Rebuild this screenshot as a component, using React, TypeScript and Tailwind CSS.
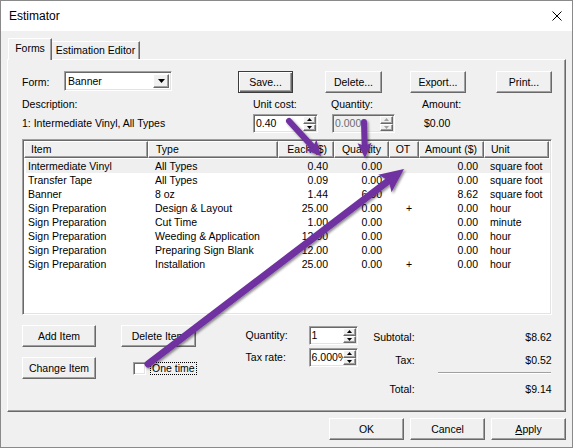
import React from "react";

const raised =
  "border border-t-white border-l-white border-r-[#696969] border-b-[#696969] shadow-[inset_-1px_-1px_0_#a0a0a0]";
const sunken =
  "border border-t-[#a0a0a0] border-l-[#a0a0a0] border-r-white border-b-white shadow-[inset_1px_1px_0_#696969,inset_-1px_-1px_0_#e3e3e3]";

function Btn({ className = "", children, def = false }: { className?: string; children: React.ReactNode; def?: boolean }) {
  return (
    <div
      className={`${
        def
          ? "border border-[#3c3c3c] shadow-[inset_1px_1px_0_#fff,inset_-1px_-1px_0_#696969,inset_-2px_-2px_0_#a0a0a0]"
          : raised
      } bg-[#f0f0f0] h-[22px] flex items-center justify-center shrink-0 ${className}`}
    >
      {children}
    </div>
  );
}

function Tri({ up = false, disabled = false }: { up?: boolean; disabled?: boolean }) {
  return (
    <svg width="5" height="3" viewBox="0 0 5 3">
      <polygon points={up ? "2.5,0 5,3 0,3" : "0,0 5,0 2.5,3"} fill={disabled ? "#a0a0a0" : "#000"} />
    </svg>
  );
}

function Spin({ value, className = "", disabled = false }: { value: string; className?: string; disabled?: boolean }) {
  return (
    <div className={`${sunken} ${disabled ? "bg-[#f0f0f0]" : "bg-white"} h-[19px] flex p-[1px] shrink-0 ${className}`}>
      <div
        className={`flex-1 flex items-center pl-[1px] overflow-hidden whitespace-nowrap ${
          disabled ? "text-[#6d6d6d]" : ""
        }`}
      >
        {value}
      </div>
      <div className="w-[13px] flex flex-col bg-[#f0f0f0]">
        <div className={`${raised} flex-1 flex items-center justify-center`}>
          <Tri up disabled={disabled} />
        </div>
        <div className={`${raised} flex-1 flex items-center justify-center`}>
          <Tri disabled={disabled} />
        </div>
      </div>
    </div>
  );
}

function Arrow({
  x1,
  y1,
  x2,
  y2,
  w,
  hl,
  hw,
}: {
  x1: number;
  y1: number;
  x2: number;
  y2: number;
  w: number;
  hl: number;
  hw: number;
}) {
  const dx = x2 - x1;
  const dy = y2 - y1;
  const L = Math.hypot(dx, dy);
  const ux = dx / L;
  const uy = dy / L;
  const nx = -uy;
  const ny = ux;
  const bx = x2 - ux * hl;
  const by = y2 - uy * hl;
  const notchX = bx + ux * hl * 0.2;
  const notchY = by + uy * hl * 0.2;
  const pts = [
    [x2, y2],
    [bx + (nx * hw) / 2, by + (ny * hw) / 2],
    [notchX, notchY],
    [bx - (nx * hw) / 2, by - (ny * hw) / 2],
  ]
    .map((p) => p.join(","))
    .join(" ");
  return (
    <g filter="url(#shadow)">
      <line x1={x1} y1={y1} x2={notchX + ux * 1} y2={notchY + uy * 1} stroke="#7030a0" strokeWidth={w} strokeLinecap="round" />
      <polygon points={pts} fill="#7030a0" />
    </g>
  );
}

const rows = [
  ["Intermediate Vinyl", "All Types", "0.40", "0.00", "", "0.00", "square foot"],
  ["Transfer Tape", "All Types", "0.09", "0.00", "", "0.00", "square foot"],
  ["Banner", "8 oz", "1.44", "6.00", "", "8.62", "square foot"],
  ["Sign Preparation", "Design & Layout", "25.00", "0.00", "+", "0.00", "hour"],
  ["Sign Preparation", "Cut Time", "1.00", "0.00", "", "0.00", "minute"],
  ["Sign Preparation", "Weeding & Application", "12.00", "0.00", "", "0.00", "hour"],
  ["Sign Preparation", "Preparing Sign Blank", "12.00", "0.00", "", "0.00", "hour"],
  ["Sign Preparation", "Installation", "25.00", "0.00", "+", "0.00", "hour"],
];

const hdr = `${raised} bg-[#f0f0f0] h-full flex items-center shrink-0`;

export default function App() {
  return (
    <div className="w-[573px] h-[448px] bg-[#f0f0f0] border border-[#8a8a8a] relative overflow-hidden font-['Liberation_Sans',Arial,sans-serif] text-[10.5px] text-black leading-none flex flex-col">
      {/* Title bar */}
      <div className="h-[30px] bg-white flex items-center pl-[8px] pr-[10px] shrink-0">
        <span className="text-[12px]">Estimator</span>
        <svg className="ml-auto" width="10" height="10" viewBox="0 0 10 10">
          <path d="M0.5 0.5 L9.5 9.5 M9.5 0.5 L0.5 9.5" stroke="#000" strokeWidth="1" />
        </svg>
      </div>

      {/* Body */}
      <div className="px-[6px] flex flex-col">
        {/* Tabs */}
        <div className="h-[28px] flex items-end">
          <div className="ml-[1px] w-[44px] h-[22px] mb-[-1px] relative z-10 bg-[#f0f0f0] border-t border-l border-t-white border-l-white border-r border-r-[#696969] shadow-[inset_-1px_0_0_#a0a0a0] flex items-center justify-center pb-[2px]">
            Forms
          </div>
          <div className="w-[88px] h-[18px] bg-[#f0f0f0] border-t border-t-white border-r border-r-[#696969] shadow-[inset_-1px_0_0_#a0a0a0] flex items-center justify-center">
            Estimation Editor
          </div>
        </div>

        {/* Panel */}
        <div className="h-[353px] border border-t-white border-l-white border-r-[#696969] border-b-[#696969] shadow-[inset_-1px_-1px_0_#a0a0a0] pl-[14px] flex flex-col">
          {/* Row 1 */}
          <div className="mt-[11px] h-[22px] flex items-start">
            <div className="w-[42px] h-[22px] flex items-center">Form:</div>
            <div className={`${sunken} bg-white w-[108px] h-[20px] flex items-center p-[2px] shrink-0`}>
              <span className="pl-[1px] flex-1">Banner</span>
              <div className={`${raised} bg-[#f0f0f0] w-[16px] h-full flex items-center justify-center`}>
                <svg width="7" height="4" viewBox="0 0 7 4">
                  <polygon points="0,0 7,0 3.5,4" fill="#000" />
                </svg>
              </div>
            </div>
            <Btn def className="ml-[66px] w-[55px]">
              Save...
            </Btn>
            <Btn className="ml-[32px] w-[57px]">Delete...</Btn>
            <Btn className="ml-[28px] w-[56px]">Export...</Btn>
            <Btn className="ml-[30px] w-[56px]">Print...</Btn>
          </div>

          {/* Row 2 */}
          <div className="mt-[4px] h-[14px] flex items-center">
            <div className="w-[231px]">Description:</div>
            <div className="w-[78px]">Unit cost:</div>
            <div className="w-[91px]">Quantity:</div>
            <div>Amount:</div>
          </div>

          {/* Row 3 */}
          <div className="mt-[3px] h-[19px] flex items-center">
            <div className="w-[231px] shrink-0">1: Intermediate Vinyl, All Types</div>
            <Spin value="0.40" className="w-[65px]" />
            <Spin value="0.000" disabled className="ml-[14px] w-[63px]" />
            <div className="ml-[29px]">$0.00</div>
          </div>

          {/* List */}
          <div className={`${sunken} bg-white mt-[6px] w-[530px] h-[176px] p-[1px] flex flex-col shrink-0`}>
            <div className="h-[17px] flex">
              <div className={`${hdr} w-[124px] pl-[6px]`}>Item</div>
              <div className={`${hdr} w-[130px] pl-[7px]`}>Type</div>
              <div className={`${hdr} w-[56px] justify-end pr-[6px]`}>Each ($)</div>
              <div className={`${hdr} w-[55px] justify-end pr-[7px]`}>Quantity</div>
              <div className={`${hdr} w-[30px] justify-center pr-[2px]`}>OT</div>
              <div className={`${hdr} w-[65px] justify-end pr-[6px]`}>Amount ($)</div>
              <div className={`${hdr} w-[65px] pl-[6px]`}>Unit</div>
            </div>
            <div className="pt-[1px] flex flex-col">
              {rows.map((r, i) => (
                <div key={i} className={`h-[14px] flex items-center ${i === 0 ? "bg-[#efefef] ml-[2px]" : ""}`}>
                  <div className={`${i === 0 ? "w-[122px] pl-[2px]" : "w-[124px] pl-[4px]"} shrink-0 whitespace-nowrap`}>{r[0]}</div>
                  <div className="w-[130px] pl-[7px] shrink-0 whitespace-nowrap">{r[1]}</div>
                  <div className="w-[56px] pr-[6px] text-right shrink-0">{r[2]}</div>
                  <div className="w-[55px] pr-[7px] text-right shrink-0">{r[3]}</div>
                  <div className="w-[30px] pl-[17px] shrink-0">{r[4]}</div>
                  <div className="w-[65px] pr-[6px] text-right shrink-0">{r[5]}</div>
                  <div className="w-[65px] pl-[6px] shrink-0 whitespace-nowrap">{r[6]}</div>
                </div>
              ))}
            </div>
          </div>

          {/* Bottom controls */}
          <div className="mt-[10px] flex items-start">
            <div className="flex flex-col">
              <div className="flex">
                <Btn className="w-[74px]">Add Item</Btn>
                <Btn className="ml-[25px] w-[75px]">Delete Item</Btn>
              </div>
              <div className="mt-[10px] flex items-center">
                <Btn className="w-[74px]">Change Item</Btn>
                <div className={`${sunken} bg-white ml-[37px] w-[13px] h-[13px] mt-[1px]`} />
                <div className="ml-[4px] border border-dotted border-black px-[1px] h-[13px] flex items-center mt-[1px]">
                  One time
                </div>
              </div>
            </div>

            <div className="ml-[49px] mt-[1px] flex flex-col">
              <div className="h-[19px] flex items-center">
                <div className="w-[63px]">Quantity:</div>
                <Spin value="1" className="w-[49px]" />
              </div>
              <div className="mt-[3px] h-[19px] flex items-center">
                <div className="w-[63px]">Tax rate:</div>
                <Spin value="6.000%" className="w-[49px]" />
              </div>
            </div>

            <div className="ml-[13px] w-[181px] flex flex-col">
              <div className="mt-[5px] h-[14px] flex items-center">
                <div className="w-[44px] text-right">Subtotal:</div>
                <div className="flex-1 text-right">$8.62</div>
              </div>
              <div className="mt-[9px] h-[14px] flex items-center">
                <div className="w-[44px] text-right">Tax:</div>
                <div className="flex-1 text-right">$0.52</div>
              </div>
              <div className="mt-[5px] ml-[67px] w-[113px] h-[2px] border-t border-t-[#a0a0a0] border-b border-b-white" />
              <div className="mt-[8px] h-[14px] flex items-center">
                <div className="w-[44px] text-right">Total:</div>
                <div className="flex-1 text-right">$9.14</div>
              </div>
            </div>
          </div>
        </div>

        {/* Dialog buttons */}
        <div className="mt-[6px] flex justify-end gap-[6px]">
          <Btn className="w-[75px]">OK</Btn>
          <Btn className="w-[75px]">Cancel</Btn>
          <Btn className="w-[75px]">
            <span>
              <span className="underline">A</span>pply
            </span>
          </Btn>
        </div>
      </div>

      {/* Annotation arrows */}
      <svg className="absolute left-[-1px] top-[-1px] pointer-events-none" width="573" height="448" viewBox="0 0 573 448">
        <defs>
          <filter id="shadow" x="-20%" y="-20%" width="140%" height="140%">
            <feDropShadow dx="1.5" dy="1.5" stdDeviation="1.2" floodColor="#000" floodOpacity="0.45" />
          </filter>
        </defs>
        <Arrow x1={289} y1={121} x2={321} y2={156} w={6} hl={15} hw={15} />
        <Arrow x1={364} y1={122} x2={365} y2={158} w={6} hl={15} hw={14} />
        <Arrow x1={148} y1={364} x2={404} y2={169} w={7} hl={24} hw={22} />
      </svg>
    </div>
  );
}
